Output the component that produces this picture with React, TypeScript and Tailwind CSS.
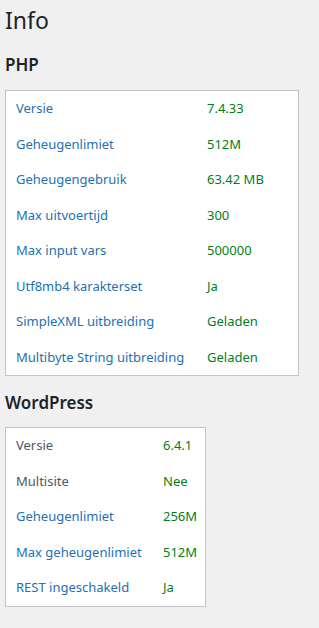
import React from "react";

type Row = { label: string; value: string; muted?: boolean };

const php: Row[] = [
  { label: "Versie", value: "7.4.33" },
  { label: "Geheugenlimiet", value: "512M" },
  { label: "Geheugengebruik", value: "63.42 MB" },
  { label: "Max uitvoertijd", value: "300" },
  { label: "Max input vars", value: "500000" },
  { label: "Utf8mb4 karakterset", value: "Ja" },
  { label: "SimpleXML uitbreiding", value: "Geladen" },
  { label: "Multibyte String uitbreiding", value: "Geladen" },
];

const wp: Row[] = [
  { label: "Versie", value: "6.4.1", muted: true },
  { label: "Multisite", value: "Nee", muted: true },
  { label: "Geheugenlimiet", value: "256M" },
  { label: "Max geheugenlimiet", value: "512M" },
  { label: "REST ingeschakeld", value: "Ja" },
];

function InfoTable({ rows, boxW, labelW }: { rows: Row[]; boxW: string; labelW: string }) {
  return (
    <div className={`${boxW} bg-white border border-[#c3c4c7]`}>
      {rows.map((r) => (
        <div key={r.label + r.value} className="flex items-start h-[35.5px] pt-[8px]">
          <div
            className={`${labelW} shrink-0 pl-[10px] whitespace-nowrap ${
              r.muted ? "text-[#50575e]" : "text-[#2271b1]"
            }`}
          >
            {r.label}
          </div>
          <div className="text-[#00801a] whitespace-nowrap">{r.value}</div>
        </div>
      ))}
    </div>
  );
}

export default function App() {
  return (
    <div
      className="min-h-[628px] bg-[#f0f0f1] pl-[5px] pt-[6px] text-[13px] leading-[18px] text-[#1d2327]"
      style={{ fontFamily: '"Noto Sans", "Open Sans", sans-serif' }}
    >
      <h1 className="text-[23px] leading-[29px] font-normal">Info</h1>
      <h2 className="mt-[18px] text-[17px] leading-[23px] font-semibold">PHP</h2>
      <div className="mt-[14px]">
        <InfoTable rows={php} boxW="w-[294px]" labelW="w-[201px]" />
      </div>
      <h2 className="mt-[15px] text-[17px] leading-[23px] font-semibold">WordPress</h2>
      <div className="mt-[13px]">
        <InfoTable rows={wp} boxW="w-[201px]" labelW="w-[157px]" />
      </div>
    </div>
  );
}
